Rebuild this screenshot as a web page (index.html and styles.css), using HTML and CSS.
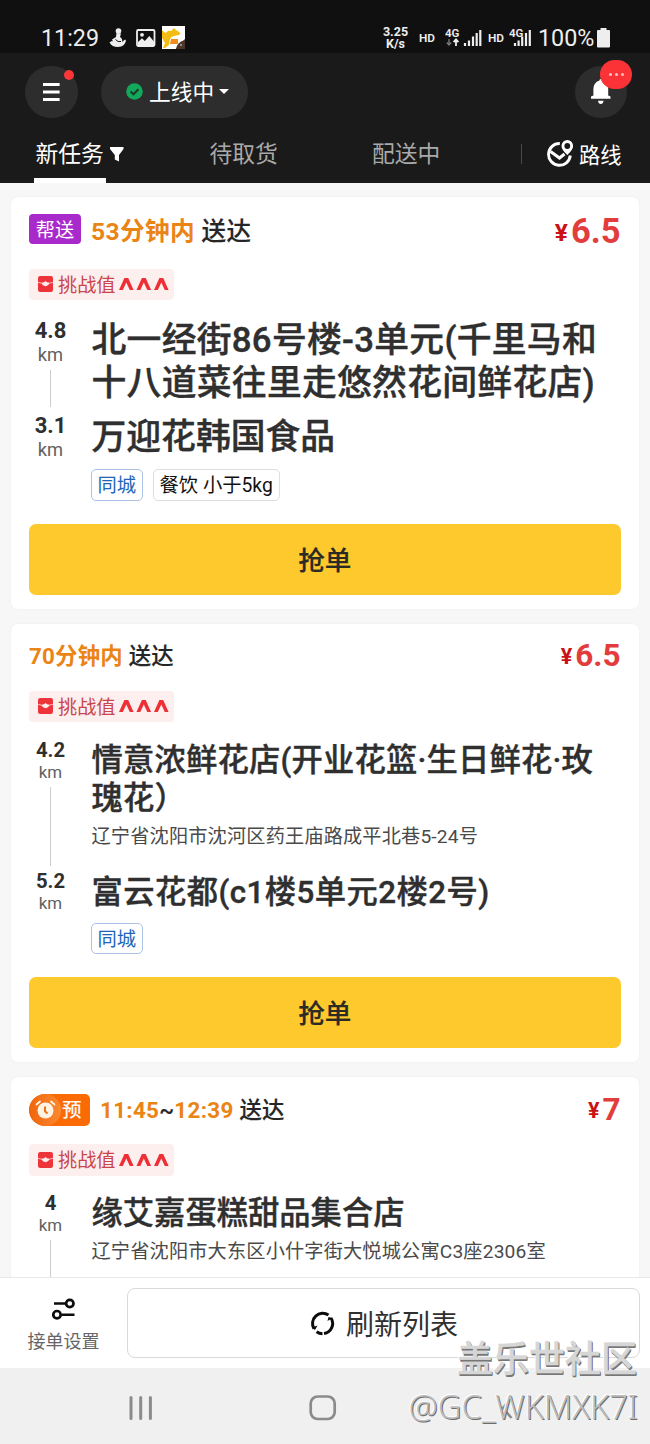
FILE: index.html
```html
<!DOCTYPE html>
<html lang="zh-CN">
<head>
<meta charset="utf-8">
<title>新任务</title>
<link rel="stylesheet" href="styles.css">
</head>
<body>
<svg class="defs" width="0" height="0">
  <symbol id="challenge" viewBox="0 0 15 16">
    <rect x="0" y="0" width="15" height="16" rx="2.2" fill="#ee343b"/>
    <path d="M0 6.300 L4 7.300 M11 7.300 L15 6.300" stroke="#f9b5b5" stroke-width="1"/>
    <path d="M3.500 6.800 L6 6.3 L7.5 5 L9 6.3 L11.500 6.800 Q10.4 10 7.5 10.200 Q4.6 10 3.500 6.800Z" fill="#fdecec"/>
  </symbol>
  <symbol id="carets" viewBox="0 0 50 14">
    <path d="M0 13 L5.4 1 H9.2 L14.6 13 H10.8 L7.3 5.400 L3.8 13Z M17.5 13 L22.9 1 H26.7 L32.1 13 H28.300 L24.8 5.400 L21.300 13Z M35 13 L40.4 1 H44.200 L49.6 13 H45.800 L42.3 5.400 L38.800 13Z" fill="#ee2f36"/>
  </symbol>
</svg>
<div class="screen">
  <header class="top">
    <div class="status">
      <span class="clock">11:29</span>
      <svg class="st-person" width="18" height="20" viewBox="0 0 18 20"><circle cx="9.5" cy="3" r="2.8" fill="#eee"/><path d="M7.5 5 L12 5.5 L11 9 Q14 11 13 14 L16 11.5 L17 12.5 Q16 18.5 9 19 Q3 19 .5 14.5 Q3 12 4 13.5 L3 11.5 L7 9Z" fill="#eee"/><path d="M6.5 11.5 Q9 14.5 12 13.5" stroke="#101010" stroke-width="1" fill="none"/></svg>
      <svg class="st-image" width="20" height="18" viewBox="0 0 20 18"><rect x="1" y="1" width="17.5" height="16" rx="1.2" fill="none" stroke="#eee" stroke-width="1.8"/><circle cx="6" cy="5.8" r="1.9" fill="#eee"/><path d="M2 16 V13 L6 9.3 L8.8 12 L13.3 7 L18 12.5 V16Z" fill="#eee"/></svg>
      <svg class="st-app" width="23" height="23" viewBox="0 0 23 23"><path d="M0 0H23V13L14 23H0Z" fill="#fff"/><path d="M0 4 Q3 8 5 6 Q6 4 9 5 L12 2 L14 4 Q17 5 18.500 7.500 L17 9 L12 10 Q9 10.500 8 13 L7 19 L3 22 H1 L3 17 L0 12Z" fill="#f5bd13"/><path d="M9 13 H16 V18 H8Z" fill="#f58b1d"/><path d="M14 23 Q15 16 23 14 V23Z" fill="#4a362b"/><path d="M18 18h2v2h-2z" fill="#a48675"/></svg>
      <span class="speed"><span>3.25</span><span>K/s</span></span>
      <span class="hd hd-a">HD</span>
      <svg class="sig-a" width="37" height="21" viewBox="0 0 37 21"><text x="0" y="9.7" class="fourg">4G</text><path d="M4 12v6M1.8 15.5 4 18l2.2-2.5" stroke="#777" stroke-width="1.4" fill="none"/><path d="M11 19v-6M8.6 15.2 11 12.4l2.4 2.8" stroke="#eee" stroke-width="1.8" fill="none"/><path d="M20 16v3M24 13.5v5.5M28 9.5v9.5M31.7 6v13M35.3 3v16" stroke="#eee" stroke-width="2.2"/></svg>
      <span class="hd hd-b">HD</span>
      <svg class="sig-b" width="23" height="21" viewBox="0 0 23 21"><text x="0" y="9.7" class="fourg">4G</text><path d="M6 16v3M9.6 13.5v5.5M13.2 9.5v9.5M17 6v13M20.8 3v16" stroke="#eee" stroke-width="2.2"/></svg>
      <span class="percent">100%</span>
      <svg class="battery" width="13" height="20" viewBox="0 0 13 20"><path d="M3.5 0h6v2H12a1 1 0 0 1 1 1v15.5a1 1 0 0 1-1 1H1a1 1 0 0 1-1-1V3a1 1 0 0 1 1-1h2.5Z" fill="#eee"/></svg>
    </div>
    <div class="actions">
      <div class="round menu">
        <svg width="17" height="18" viewBox="0 0 17 18"><path d="M0 1.5h16.6M0 9h16.6M0 16.5h16.6" stroke="#fff" stroke-width="2.8"/></svg>
        <i class="dot"></i>
      </div>
      <div class="pill">
        <svg width="17" height="17" viewBox="0 0 17 17"><circle cx="8.5" cy="8.5" r="8.3" fill="#12a95c"/><path d="M4.6 8.5 7.5 11.3 12.4 6.3" stroke="#1c3a2a" stroke-width="2" fill="none"/></svg>
        <span>上线中</span>
        <svg class="drop" width="10" height="5" viewBox="0 0 10 5"><path d="M0 0H10L5 5Z" fill="#fff"/></svg>
      </div>
      <div class="round bell">
        <svg width="20" height="25" viewBox="0 0 20 25"><path d="M8.5 1.5a1.4 1.4 0 0 1 2.8 0Q17.2 3.6 17.2 10v6.5l2.3 1v2.3H0v-2.3l2.4-1V10Q2.400 3.600 8.500 1.500Z M7 21.800h5.600Q12 25 9.800 25 7.500 25 7 21.800Z" fill="#fff"/></svg>
        <i class="more"><b></b><b></b><b></b></i>
      </div>
    </div>
    <nav class="tabs">
      <div class="tab active">新任务<svg width="14" height="15" viewBox="0 0 14 15"><path d="M0 0H13.500V2L9 8V14.500L4.800 12.500V8L0 2Z" fill="#fff"/></svg></div>
      <div class="tab second">待取货</div>
      <div class="tab third">配送中</div>
      <div class="route">
        <svg width="27" height="28" viewBox="0 0 27 28"><path d="M12.800 3.500A10.900 10.900 0 1 0 23.300 15.500" fill="none" stroke="#fff" stroke-width="2.900"/><path d="M3.500 11.500 12.500 18 17.500 14" fill="none" stroke="#fff" stroke-width="3"/><path d="M20.300 15 Q14.500 9.500 14.500 5.900a5.800 5.800 0 0 1 11.600 0Q26.100 9.500 20.300 15Z" fill="#fff"/><circle cx="20.300" cy="6" r="2.900" fill="#1a1a1a"/></svg>
        <span>路线</span>
      </div>
    </nav>
  </header>

  <main class="list">
    <section class="card large">
      <div class="head"><span class="help">帮送</span><span class="time"><em>53分钟内</em> 送达</span><span class="price"><small>¥</small>6.5</span></div>
      <div class="challenge"><svg width="15" height="16"><use href="#challenge"/></svg><span>挑战值</span><svg width="50" height="14"><use href="#carets"/></svg></div>
      <div class="stop from">
        <div class="rail"><b>4.8</b><span>km</span><i></i></div>
        <div class="place"><h2>北一经街86号楼-3单元(千里马和<br>十八道菜往里走悠然花间鲜花店)</h2></div>
      </div>
      <div class="stop">
        <div class="rail"><b>3.1</b><span>km</span></div>
        <div class="place"><h2>万迎花韩国食品</h2><div class="tags"><span class="city">同城</span><span class="kind">餐饮 小于5kg</span></div></div>
      </div>
      <div class="grab">抢单</div>
    </section>

    <section class="card second-card">
      <div class="head"><span class="time"><em>70分钟内</em> 送达</span><span class="price"><small>¥</small>6.5</span></div>
      <div class="challenge"><svg width="15" height="16"><use href="#challenge"/></svg><span>挑战值</span><svg width="50" height="14"><use href="#carets"/></svg></div>
      <div class="stop from">
        <div class="rail"><b>4.2</b><span>km</span><i></i></div>
        <div class="place"><h2>情意浓鲜花店(开业花篮·生日鲜花·玫<br>瑰花）</h2><p>辽宁省沈阳市沈河区药王庙路成平北巷5-24号</p></div>
      </div>
      <div class="stop to">
        <div class="rail"><b>5.2</b><span>km</span></div>
        <div class="place"><h2>富云花都(c1楼5单元2楼2号)</h2><div class="tags"><span class="city">同城</span></div></div>
      </div>
      <div class="grab">抢单</div>
    </section>

    <section class="card third-card">
      <div class="head"><span class="booked"><i><svg width="21" height="20" viewBox="0 0 21 20"><circle cx="10.500" cy="10.500" r="8" fill="#fff3e4"/><path d="M1.500 4.500 5 1.500M19.500 4.500 16 1.500" stroke="#fff3e4" stroke-width="1.800" stroke-linecap="round"/><path d="M10 6.500v4.800l2.500 2.200" stroke="#e97418" stroke-width="2" fill="none"/></svg></i>预</span><span class="time"><em>11:45</em>~<em>12:39</em> 送达</span><span class="price"><small>¥</small>7</span></div>
      <div class="challenge"><svg width="15" height="16"><use href="#challenge"/></svg><span>挑战值</span><svg width="50" height="14"><use href="#carets"/></svg></div>
      <div class="stop from">
        <div class="rail"><b>4</b><span>km</span><i></i></div>
        <div class="place"><h2>缘艾嘉蛋糕甜品集合店</h2><p>辽宁省沈阳市大东区小什字街大悦城公寓C3座2306室</p></div>
      </div>
    </section>
  </main>

  <footer class="toolbar">
    <div class="settings">
      <svg width="24" height="22" viewBox="0 0 24 22" fill="none" stroke="#0c0c0c"><path d="M2 5.500H13.500M10 16.700H22.500" stroke-width="2.600"/><circle cx="17.800" cy="5.500" r="3.700" stroke-width="2.700"/><circle cx="5" cy="16.700" r="3.700" stroke-width="2.700"/></svg>
      <span>接单设置</span>
    </div>
    <div class="refresh">
      <svg width="25" height="25" viewBox="0 0 25 25" fill="none" stroke="#0c0c0c" stroke-width="3"><path d="M4 17.800A10.200 10.200 0 0 1 18.500 4.100"/><path d="M21 7A10.200 10.200 0 0 1 14 22.600"/><path d="M12.500 22.700A10.200 10.200 0 0 1 6.600 20.800"/><path d="M2 16.500 7.500 14.500 5 19Z" fill="#0c0c0c" stroke="none"/><path d="M17.500 10 18.500 6 22.500 7Z" fill="#0c0c0c" stroke="none"/></svg>
      <span>刷新列表</span>
    </div>
  </footer>
  <div class="sysnav">
    <svg width="24" height="24" viewBox="0 0 24 24"><path d="M2 1.500v21M11.700 1.500v21M21.400 1.500v21" stroke="#8b8b8b" stroke-width="3" stroke-linecap="round"/></svg>
    <svg width="28" height="26" viewBox="0 0 28 26"><rect x="1.700" y="1.500" width="24" height="22.500" rx="7" fill="none" stroke="#8b8b8b" stroke-width="2.700"/></svg>
    <svg width="14" height="24" viewBox="0 0 14 24"><path d="M11.500 2 3 12l8.500 10" fill="none" stroke="#8b8b8b" stroke-width="2.500"/></svg>
  </div>
  <div class="watermark"><strong>盖乐世社区</strong><span>@GC_WKMXK7I</span></div>
</div>
</body>
</html>
```
FILE: styles.css
```css
* { box-sizing: border-box; }
body { margin: 0; font-family: Roboto, "Noto Sans CJK SC", sans-serif; color: #2f2f2f; }
svg { display: block; flex: none; }
em, i { font-style: normal; }
.defs { position: absolute; }
.screen { position: relative; width: 650px; height: 1444px; overflow: hidden; display: flex; flex-direction: column; background: #f7f7f7; }

/* header */
.top { height: 182.5px; flex: none; background: #1a1a1a; }
.status { height: 53px; padding: 22px 0 0 41px; display: flex; align-items: center; background: #101010; color: #eee; }
.clock { width: 68px; font-size: 23.3px; line-height: 30px; }
.st-image { margin-left: 9px; }
.st-app { margin-left: 6px; }
.speed { width: 27px; margin-left: 197px; display: flex; flex-direction: column; align-items: center; font-size: 12.500px; line-height: 12px; font-weight: 700; }
.hd { font-size: 11.800px; font-weight: 600; }
.hd-a { width: 26px; margin-left: 10px; }
.hd-b { width: 21px; margin-left: 6px; }
.fourg { font: 600 11.500px Roboto, sans-serif; fill: #eee; }
.percent { width: 59px; margin-left: 6px; font-size: 23.3px; line-height: 30px; }
.actions { padding: 12.500px 23px 0 25px; display: flex; }
.round { position: relative; width: 52.500px; height: 52.500px; border-radius: 50%; background: #2d2d2d; display: flex; align-items: center; justify-content: center; }
.dot { position: absolute; left: 38.500px; top: 4px; width: 10.500px; height: 10.500px; border-radius: 50%; background: #fb3638; }
.pill { width: 147px; height: 52.500px; margin-left: 23.500px; padding-left: 25px; border-radius: 27px; background: #2d2d2d; color: #fff; display: flex; align-items: center; font-size: 21.700px; line-height: 30px; }
.pill span { margin: 2px 4.500px 0 6px; }
.bell { margin-left: auto; }
.more { position: absolute; left: 25.500px; top: -5.500px; width: 32px; height: 29px; border-radius: 15px; background: #fc3336; display: flex; align-items: center; justify-content: center; gap: 3px; }
.more b { width: 3px; height: 3px; border-radius: 50%; background: #ffc1c1; }
.tabs { height: 64.500px; display: flex; padding-left: 34px; }
.tab { height: 64.500px; padding-top: 21px; font-size: 22.800px; line-height: 32px; color: #a9a9a9; }
.active { display: flex; width: 175.500px; padding-left: 1.500px; color: #fff; background: linear-gradient(#fff, #fff) 0 100% / 72px 5px no-repeat; }
.active svg { margin: 8px 0 0 6px; }
.second { width: 162.500px; }
.third { width: 148.500px; }
.route { height: 20px; margin-top: 26px; padding-left: 25px; border-left: 1px solid #4a4a4a; display: flex; align-items: center; gap: 5.500px; font-size: 21.300px; line-height: 30px; color: #fff; white-space: nowrap; }
.route span { padding-top: 3px; }

/* order list */
.list { height: 1094.500px; flex: none; overflow: hidden; padding: 14px 11px 0; }
.card { padding: 17px 18.500px 14px 18px; border-radius: 7px; background: #fff; box-shadow: 0 0 3px rgba(0, 0, 0, .04); }
.head { display: flex; align-items: center; height: 30px; }
.help { width: 52px; height: 30px; margin-right: 10px; border-radius: 4px; background: #a82acb; color: #fff; font-size: 19.200px; line-height: 33px; text-align: center; }
.time { font-size: 22.400px; line-height: 32px; font-weight: 500; color: #262626; letter-spacing: .2px; white-space: pre; -webkit-text-stroke: .15px; }
.time em { font-weight: 700; color: #ea8415; -webkit-text-stroke: 0; }
.large .time { font-size: 24.600px; padding-top: 6px; letter-spacing: .4px; }
.price { margin-left: auto; padding-top: 3px; font-size: 31.500px; line-height: 32px; font-weight: 700; color: #e23c3c; }
.price small { margin-right: 3px; font-size: 21.500px; color: #cc1015; position: relative; top: -2px; }
.large .price { padding-top: 9px; font-size: 34.500px; }
.large .price small { font-size: 24.500px; top: -2px; }
.challenge { width: 145px; height: 31.500px; margin-top: 25px; padding-left: 9px; border-radius: 4px; background: #fdefee; display: flex; align-items: center; color: #c9474c; font-size: 19.200px; line-height: 28px; }
.challenge span { margin: 3px 3.500px 0 5px; }
.stop { display: flex; }
.rail { width: 43px; margin-right: 19.500px; flex: none; display: flex; flex-direction: column; align-items: center; }
.rail b { font-size: 20.300px; line-height: 23px; font-weight: 700; }
.rail span { font-size: 16.900px; line-height: 21px; color: #616161; }
.rail i { width: 1.500px; flex: 1; margin: 4px 0; background: #ccc; }
.place { padding-top: 3px; }
.place h2 { margin: 0; font-size: 31.300px; line-height: 38.500px; font-weight: 500; white-space: nowrap; -webkit-text-stroke: .4px; }
.place p { margin: 5.500px 0 0; font-size: 19.200px; line-height: 26px; color: #4a4a4a; letter-spacing: .16px; white-space: nowrap; }
.large .rail b { font-size: 22px; line-height: 25.500px; }
.large .rail span { font-size: 18.300px; line-height: 24px; }
.large .rail i { margin: 3px 0 6px; }
.large .place h2 { font-size: 34.800px; line-height: 43.500px; }
.tags { display: flex; gap: 9.500px; margin: 10px 0 0 -1px; }
.tags span { height: 31.500px; padding: 0 6px; border: 1.500px solid #dedede; border-radius: 5px; color: #111; font-size: 19.300px; line-height: 32px; white-space: nowrap; }
.tags .city { border-color: #aac2e5; color: #2265b8; }
.grab { height: 71px; margin-top: 23.500px; border-radius: 7px; background: #fec92c; color: #2c2a24; font-size: 26.600px; line-height: 73px; font-weight: 500; text-align: center; -webkit-text-stroke: .2px; }
.large .from { margin-top: 17.500px; height: 95px; }
.large .from .place { padding-top: 1px; }
.large .from h2 { letter-spacing: .28px; }
.second-card { margin-top: 15px; padding-top: 17px; }
.second-card .challenge { margin-top: 19.500px; }
.second-card .from { margin-top: 16.500px; height: 131.500px; }
.second-card .from h2 { letter-spacing: .2px; }
.second-card .to .place { padding-top: 4px; }
.second-card .to h2 { letter-spacing: .45px; }
.second-card .grab { margin-top: 23px; }
.third-card { margin-top: 15px; height: 240px; }
.third-card .head { height: 32px; }
.third-card .time { letter-spacing: .3px; }
.third-card .challenge { margin-top: 18px; }
.third-card .from { margin-top: 16.500px; height: 130px; }
.booked { display: flex; width: 61px; height: 32px; margin-right: 10px; border-radius: 16px 5px 5px 16px; background: #fa6b06; color: #fff; font-size: 19.500px; line-height: 34px; overflow: hidden; -webkit-text-stroke: .2px; }
.booked i { width: 32px; height: 32px; margin-right: 1px; display: flex; align-items: center; justify-content: center; border-radius: 16px; background: linear-gradient(90deg, #f0650c, #fb8a30); }

/* bottom */
.toolbar { height: 91px; flex: none; display: flex; padding: 10px 10.500px 0 0; border-top: 1px solid #e8e8e8; background: #fff; }
.settings { width: 127px; display: flex; flex-direction: column; align-items: center; padding-top: 10px; font-size: 18px; line-height: 24px; color: #666; }
.settings span { margin-top: 10px; }
.refresh { flex: 1; height: 70px; padding-left: 1.500px; border: 1.500px solid #d9d9d9; border-radius: 8px; display: flex; align-items: center; justify-content: center; gap: 11px; font-size: 28px; line-height: 40px; color: #303030; }
.refresh span { padding-top: 5px; }
.sysnav { height: 76px; flex: none; display: flex; align-items: center; padding: 3px 0 0 129px; background: #f0f0f0; }
.sysnav svg + svg { margin-left: 156px; }
.sysnav svg + svg + svg { margin-left: 163px; }
.watermark { position: absolute; right: 12px; top: 1334px; display: flex; flex-direction: column; align-items: flex-end; color: #d6d6d6; text-shadow: 1px 1px 0 #777, 1px 2px 0 #777, -1px -1px 0 #fff; }
.watermark strong { margin-right: 1px; font-size: 36px; line-height: 52px; font-weight: 500; -webkit-text-stroke: .4px; }
.watermark span { font-family: "Noto Sans", sans-serif; font-size: 32.600px; line-height: 41px; font-weight: 300; color: #bdbdbd; text-shadow: 1px 1px 0 #6d6d6d, -1px -1px 0 #fff; }
```
